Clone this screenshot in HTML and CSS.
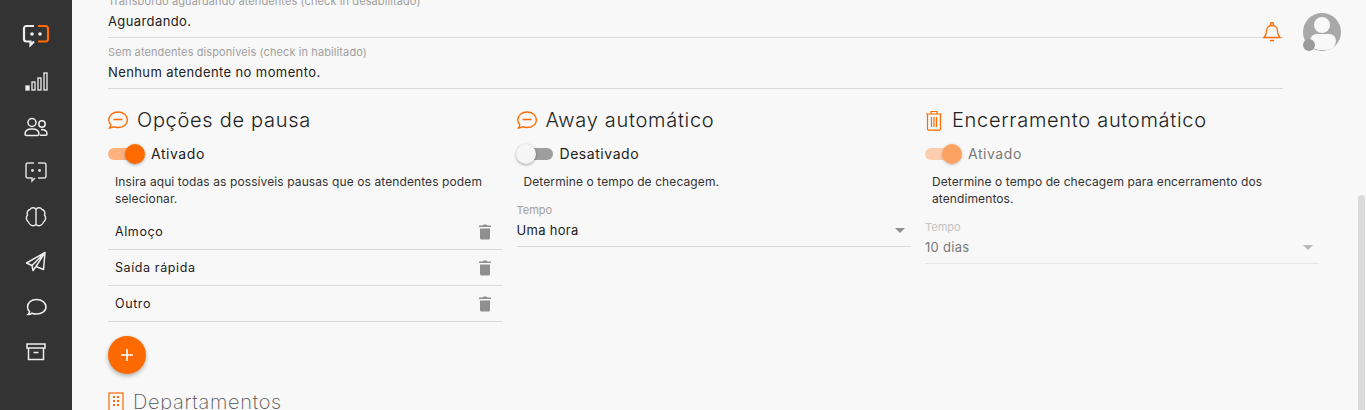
FILE: index.html
```html
<!DOCTYPE html>
<html lang="pt-BR">
<head>
  <meta charset="UTF-8" />
  <title>Configurações</title>
  <link rel="stylesheet" href="styles.css">
</head>
<body>
  <div class="app">
    <nav class="sidebar">
      <a class="nav-item logo">
        <svg width="28" height="24" viewBox="0 0 28 24" fill="none" stroke-width="2.2">
          <path d="M12 2H4.500A2.500 2.500 0 0 0 2 4.500V15a2.500 2.500 0 0 0 2.500 2.500H8.500V21L12 17.500" stroke="#eee"/>
          <path d="M16 2h7.500A2.500 2.500 0 0 1 26 4.500V15a2.500 2.500 0 0 1-2.500 2.500H16" stroke="#ff6a00"/>
          <circle cx="10" cy="10" r="1.800" fill="#eee"/><circle cx="18" cy="10" r="1.800" fill="#eee"/>
        </svg>
      </a>
      <a class="nav-item">
        <svg width="24" height="20" viewBox="0 0 24 20" fill="none" stroke="#eee" stroke-width="1.300">
          <rect x="2" y="14" width="3" height="4" fill="#eee"/><rect x="8" y="10" width="3" height="8"/>
          <rect x="14" y="6" width="3" height="12"/><rect x="20" y="1" width="3" height="17"/>
        </svg>
      </a>
      <a class="nav-item">
        <svg width="24" height="20" viewBox="0 0 24 20" fill="none" stroke="#eee" stroke-width="1.500">
          <circle cx="8" cy="5.500" r="4"/><path d="M2.500 18.500a1.500 1.500 0 0 1-1.500-1.500c0-3 2.500-5 7-5s7 2 7 5a1.500 1.500 0 0 1-1.500 1.500z"/>
          <circle cx="18" cy="7" r="3.200"/><path d="M17 12.500c4 0 6 1.500 6 4.500 0 .8-.5 1.200-1.200 1.200H16"/>
        </svg>
      </a>
      <a class="nav-item">
        <svg width="24" height="22" viewBox="0 0 24 22" fill="none" stroke="#ddd" stroke-width="1.500">
          <path d="M10 2H4a2 2 0 0 0-2 2v11a2 2 0 0 0 2 2h4v3l3-3M14 2h6a2 2 0 0 1 2 2v11a2 2 0 0 1-2 2h-6"/>
          <circle cx="8.500" cy="9.500" r="1.400" fill="#ddd" stroke="none"/><circle cx="15.500" cy="9.500" r="1.400" fill="#ddd" stroke="none"/>
        </svg>
      </a>
      <a class="nav-item">
        <svg width="22" height="22" viewBox="0 0 22 22" fill="none" stroke="#eee" stroke-width="1.400">
          <path d="M11 3.500C10 1.500 6.500 1 5 3.500 2.500 4 1.500 7 2.500 9 .7 11 1 14.500 3.500 16 4 19 8.500 21 11 18.500 13.500 21 18 19 18.500 16 21 14.500 21.300 11 19.500 9 20.500 7 19.500 4 17 3.500 15.500 1 12 1.500 11 3.500zM11 3.500v15"/>
        </svg>
      </a>
      <a class="nav-item">
        <svg width="22" height="22" viewBox="0 0 22 22" fill="none" stroke="#eee" stroke-width="1.500" stroke-linejoin="round">
          <path d="M20 1.500 1.500 12l5.500 2.500L20 1.500zM20 1.500l-1.500 17-7.500-3zM7 14.500l1 5 3-4"/>
        </svg>
      </a>
      <a class="nav-item">
        <svg width="21" height="18" viewBox="0 0 21 18" fill="none" stroke="#eee" stroke-width="1.500">
          <path d="M2 16.500c1.500 0 3-.5 3.800-1.300 1.300.5 3 .8 4.700.8 5 0 9.500-2.700 9.500-7C20 4.700 15.800 1.500 10.500 1.500S1.500 4.700 1.500 9c0 1.800.8 3.300 2 4.500 0 1.200-.7 2.300-1.500 3z"/>
        </svg>
      </a>
      <a class="nav-item">
        <svg width="20" height="18" viewBox="0 0 20 18" fill="none" stroke="#eee" stroke-width="1.500">
          <rect x="1" y="1" width="18" height="4"/><path d="M2.500 5v11.500h15V5M7.500 9.500h5"/>
        </svg>
      </a>
    </nav>

    <main class="content">
      <div class="field-wrap">
        <div class="field">
          <span class="field-label">Transbordo aguardando atendentes (check in desabilitado)</span>
          <span class="field-value">Aguardando.</span>
        </div>
        <div class="field">
          <span class="field-label">Sem atendentes disponíveis (check in habilitado)</span>
          <span class="field-value">Nenhum atendente no momento.</span>
        </div>
      </div>

      <div class="columns">
        <section class="col">
          <h3 class="title">
            <svg class="title-icon" width="20" height="18" viewBox="0 0 20 18" fill="none" stroke="#ff6a00" stroke-width="1.300">
              <path d="M1.500 17c1.500 0 3-.5 3.800-1.300 1.300.5 3 .8 4.700.8 5 0 9.400-3 9.400-7.500S15.200 1 10 1 .8 4.500.8 9c0 1.800.8 3.500 2 4.500 0 1.200-.5 2.500-1.300 3.500zM5.500 8.500h9"/>
            </svg>
            Opções de pausa
          </h3>
          <div class="switch-row">
            <span class="switch on"><span class="knob"></span></span>
            <span class="switch-text">Ativado</span>
          </div>
          <p class="desc">Insira aqui todas as possíveis pausas que os atendentes podem selecionar.</p>
          <ul class="pause-list">
            <li>Almoço
              <svg class="trash" width="14" height="16" viewBox="0 0 14 16" fill="#8f8f8f"><path d="M4.500 1.500 5.500.5h3l1 1H13V3H1V1.500zM2 4.500h10V14a1.500 1.500 0 0 1-1.500 1.500h-7A1.500 1.500 0 0 1 2 14z"/></svg>
            </li>
            <li>Saída rápida
              <svg class="trash" width="14" height="16" viewBox="0 0 14 16" fill="#8f8f8f"><path d="M4.500 1.500 5.500.5h3l1 1H13V3H1V1.500zM2 4.500h10V14a1.500 1.500 0 0 1-1.500 1.500h-7A1.500 1.500 0 0 1 2 14z"/></svg>
            </li>
            <li>Outro
              <svg class="trash" width="14" height="16" viewBox="0 0 14 16" fill="#8f8f8f"><path d="M4.500 1.500 5.500.5h3l1 1H13V3H1V1.500zM2 4.500h10V14a1.500 1.500 0 0 1-1.500 1.500h-7A1.500 1.500 0 0 1 2 14z"/></svg>
            </li>
          </ul>
          <button class="fab">
            <svg width="14" height="14" viewBox="0 0 14 14" stroke="#fff" stroke-width="1.600"><path d="M7 1v12M1 7h12"/></svg>
          </button>
        </section>

        <section class="col">
          <h3 class="title">
            <svg class="title-icon" width="20" height="18" viewBox="0 0 20 18" fill="none" stroke="#ff6a00" stroke-width="1.300">
              <path d="M1.500 17c1.500 0 3-.5 3.800-1.300 1.300.5 3 .8 4.700.8 5 0 9.400-3 9.400-7.500S15.200 1 10 1 .8 4.500.8 9c0 1.800.8 3.500 2 4.500 0 1.200-.5 2.500-1.300 3.500zM5.500 8.500h9"/>
            </svg>
            Away automático
          </h3>
          <div class="switch-row">
            <span class="switch off"><span class="knob"></span></span>
            <span class="switch-text">Desativado</span>
          </div>
          <p class="desc">Determine o tempo de checagem.</p>
          <div class="select">
            <span class="select-label">Tempo</span>
            <span class="select-value">Uma hora <i class="caret"></i></span>
          </div>
        </section>

        <section class="col disabled">
          <h3 class="title">
            <svg class="title-icon" width="18" height="21" viewBox="0 0 18 21" fill="none" stroke="#ff6a00" stroke-width="1.200">
              <path d="M1 4h16M6 4V1.500h6V4M2.500 4v15a1.200 1.200 0 0 0 1.200 1.200h10.600a1.200 1.200 0 0 0 1.200-1.200V4M6.500 7v10M9 7v10M11.500 7v10"/>
            </svg>
            Encerramento automático
          </h3>
          <div class="switch-row">
            <span class="switch on"><span class="knob"></span></span>
            <span class="switch-text">Ativado</span>
          </div>
          <p class="desc">Determine o tempo de checagem para encerramento dos atendimentos.</p>
          <div class="select">
            <span class="select-label">Tempo</span>
            <span class="select-value">10 dias <i class="caret"></i></span>
          </div>
        </section>
      </div>

      <h3 class="title light">
        <svg class="title-icon" width="16" height="20" viewBox="0 0 16 20" fill="none" stroke="#ff6a00" stroke-width="1.200">
          <rect x="1" y="1" width="14" height="18"/>
          <g fill="#ff6a00" stroke="none"><rect x="5" y="4" width="2" height="2"/><rect x="9" y="4" width="2" height="2"/><rect x="5" y="8" width="2" height="2"/><rect x="9" y="8" width="2" height="2"/><rect x="5" y="12" width="2" height="2"/><rect x="9" y="12" width="2" height="2"/></g>
        </svg>
        Departamentos
      </h3>
    </main>

    <div class="topbar">
      <svg width="20" height="22" viewBox="0 0 20 22" fill="none" stroke="#ff6a00" stroke-width="1.300">
        <path d="M2 16.500c1.500-1.500 2.500-3 2.500-6.500 0-3 2-5.500 5.500-5.500s5.500 2.500 5.500 5.500c0 3.500 1 5 2.500 6.500zM8.500 4.500V3a1.500 1.500 0 0 1 3 0v1.500M8 19.500h4"/>
      </svg>
      <div class="avatar">
        <span class="avatar-head"></span>
        <span class="avatar-body"></span>
        <span class="avatar-status"></span>
      </div>
    </div>

    <div class="scrollbar"></div>
  </div>
</body>
</html>
```

FILE: styles.css
```css
* {
  box-sizing: border-box;
}
body {
  margin: 0;
  font-family: Inter, "Open Sans", sans-serif;
  background: #f8f8f8;
  color: #222;
}
.app {
  position: relative;
  display: flex;
  height: 410px;
  overflow: hidden;
}

/* sidebar */
.sidebar {
  width: 72px;
  flex-shrink: 0;
  background: #333;
  display: flex;
  flex-direction: column;
  align-items: center;
  padding-top: 13px;
}
.nav-item {
  height: 45px;
  display: flex;
  align-items: center;
  justify-content: center;
}
.nav-item.logo {
  height: 46px;
}

/* content */
.content {
  flex: 1;
  padding-left: 36px;
  margin-top: -13px;
  min-width: 0;
}
.field-wrap {
  width: 1175px;
}
.field {
  height: 51px;
  padding-top: 7px;
  border-bottom: 1px solid #d9d9d9;
}
.field-label {
  display: block;
  font-size: 11px;
  line-height: 14px;
  letter-spacing: 0.1px;
  color: #a0a0a0;
}
.field-value {
  display: block;
  margin-top: 5px;
  font-size: 13px;
  line-height: 16px;
  letter-spacing: 0.4px;
  color: #222;
}
.columns {
  display: grid;
  grid-template-columns: repeat(3, 394px);
  column-gap: 14.500px;
  margin-top: 16px;
}
.title {
  margin: 0;
  height: 30px;
  display: flex;
  align-items: center;
  gap: 9px;
  font-size: 20px;
  font-weight: 300;
  letter-spacing: 0.7px;
  color: #222;
}
.title.light {
  margin-top: 13px;
  gap: 9px;
  color: #555;
  font-weight: 200;
}
.switch-row {
  display: flex;
  align-items: center;
  gap: 7px;
  height: 24px;
  margin-top: 6px;
  font-size: 14px;
  letter-spacing: 0.55px;
}
.switch {
  position: relative;
  top: 1px;
  width: 36px;
  height: 12px;
  border-radius: 6px;
  background: #ffb27f;
}
.switch.off {
  background: #9e9e9e;
}
.knob {
  position: absolute;
  top: -4px;
  right: -1px;
  width: 20px;
  height: 20px;
  border-radius: 50%;
  background: #ff6a00;
  box-shadow: 0 1px 3px rgba(0,0,0,0.35);
}
.off .knob {
  right: auto;
  left: -1px;
  background: #f5f5f5;
}
.desc {
  margin: 8px 0 0;
  padding: 0 7px;
  font-size: 12px;
  line-height: 17px;
  letter-spacing: 0.1px;
  color: #333;
}
.pause-list {
  list-style: none;
  margin: 7px 0 0;
  padding: 0;
}
.pause-list li {
  height: 36px;
  padding: 0 10px 0 7px;
  display: flex;
  align-items: center;
  justify-content: space-between;
  border-bottom: 1px solid #d9d9d9;
  font-size: 12.500px;
  letter-spacing: 0.6px;
}
.fab {
  display: flex;
  align-items: center;
  justify-content: center;
  width: 38px;
  height: 38px;
  margin-top: 14px;
  border: 0;
  padding: 0;
  border-radius: 50%;
  background: #ff6a00;
  box-shadow: 0 2px 4px rgba(0,0,0,0.3);
}
.select {
  margin-top: 4px;
  height: 53px;
  border-bottom: 1px solid #d9d9d9;
}
.select-label {
  display: block;
  padding-top: 9px;
  font-size: 11px;
  line-height: 14px;
  color: #a0a0a0;
}
.select-value {
  display: flex;
  justify-content: space-between;
  align-items: center;
  padding-right: 6px;
  margin-top: 5px;
  font-size: 13px;
  line-height: 16px;
  letter-spacing: 0.3px;
}
.caret {
  width: 0;
  height: 0;
  border-left: 5px solid transparent;
  border-right: 5px solid transparent;
  border-top: 5px solid #8f8f8f;
}
.disabled .switch-row,
.disabled .select {
  opacity: 0.6;
}

/* fixed header stuff */
.topbar {
  position: absolute;
  top: 13px;
  right: 25px;
  display: flex;
  align-items: center;
  gap: 21px;
}
.avatar {
  position: relative;
  width: 38px;
  height: 38px;
  border-radius: 50%;
  background: #a8a8a8;
}
.avatar-head {
  position: absolute;
  top: 4px;
  left: 11px;
  width: 16px;
  height: 16px;
  border-radius: 50%;
  background: #f8f8f8;
}
.avatar-body {
  position: absolute;
  top: 21px;
  left: 7px;
  width: 26px;
  height: 16px;
  border-radius: 9px 9px 12px 12px;
  background: #f8f8f8;
}
.avatar-status {
  position: absolute;
  left: 0;
  bottom: 0;
  width: 12px;
  height: 12px;
  border-radius: 50%;
  background: #9a9a9a;
}
.scrollbar {
  position: absolute;
  right: 1px;
  top: 195px;
  bottom: 0;
  width: 7px;
  border-radius: 4px 4px 0 0;
  background: #dadada;
}
```
